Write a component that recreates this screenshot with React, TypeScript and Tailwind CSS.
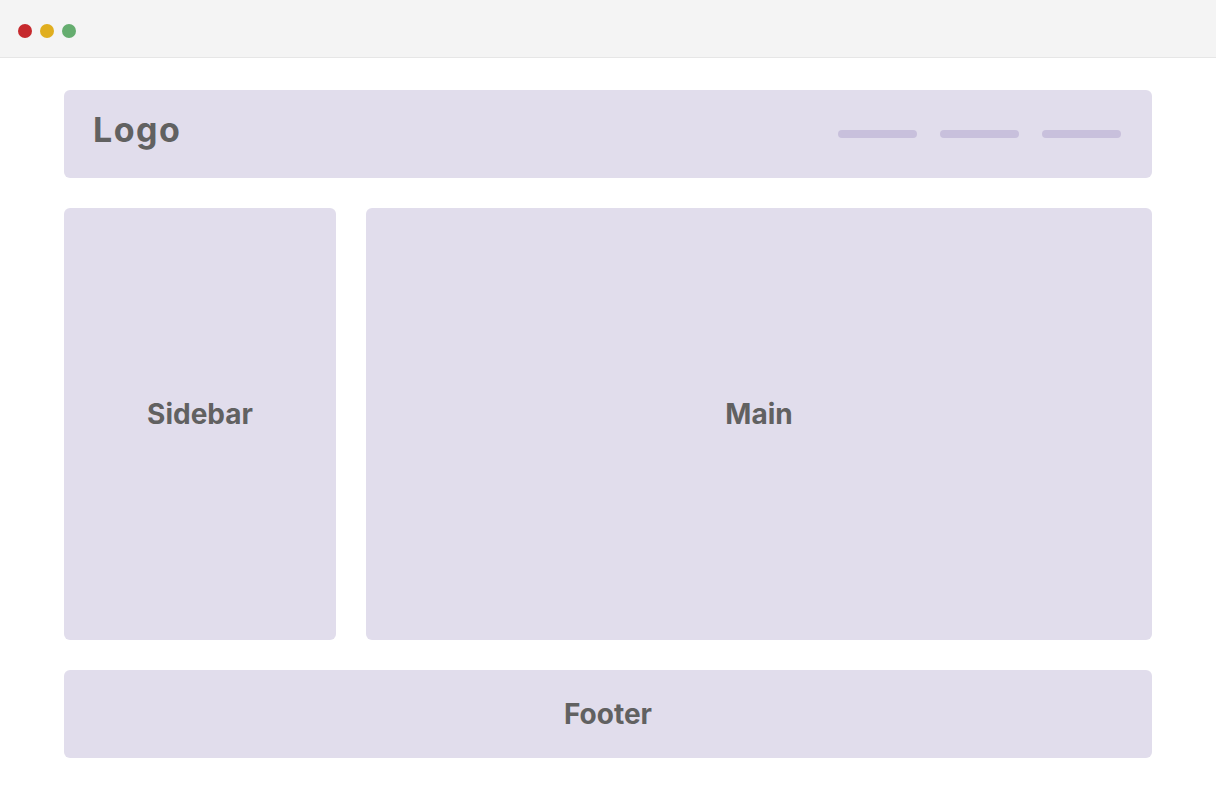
export default function App() {
  return (
    <div className="min-h-screen w-full bg-white" style={{ fontFamily: "Inter, 'Noto Sans', sans-serif" }}>
      {/* window chrome */}
      <div className="flex h-[58px] items-center gap-2 border-b border-[#e6e6e6] bg-[#f4f4f4] pl-[18px] pt-1">
        <span className="h-[14px] w-[14px] rounded-full bg-[#c6292d]" />
        <span className="h-[14px] w-[14px] rounded-full bg-[#e0ae1f]" />
        <span className="h-[14px] w-[14px] rounded-full bg-[#65ad6f]" />
      </div>

      <div className="flex flex-col gap-[30px] px-16 pt-8 text-[#616161]">
        <header className="flex h-[88px] items-center justify-between rounded-md bg-[#e1ddec] pl-7 pr-[31px]">
          <span className="mb-[9px] ml-[1px] text-[34px] font-bold tracking-[1.5px]">Logo</span>
          <nav className="flex items-center gap-[23px]">
            <span className="h-2 w-[79px] rounded-full bg-[#c8c0dc]" />
            <span className="h-2 w-[79px] rounded-full bg-[#c8c0dc]" />
            <span className="h-2 w-[79px] rounded-full bg-[#c8c0dc]" />
          </nav>
        </header>

        <div className="flex h-[432px] gap-[30px]">
          <aside className="flex w-[272px] items-center justify-center rounded-md bg-[#e1ddec] pb-5 text-[28px] font-bold">
            Sidebar
          </aside>
          <main className="flex flex-1 items-center justify-center rounded-md bg-[#e1ddec] pb-5 text-[28px] font-bold">
            Main
          </main>
        </div>

        <footer className="flex h-[88px] items-center justify-center rounded-md bg-[#e1ddec] text-[28px] font-bold">
          Footer
        </footer>
      </div>
    </div>
  );
}
